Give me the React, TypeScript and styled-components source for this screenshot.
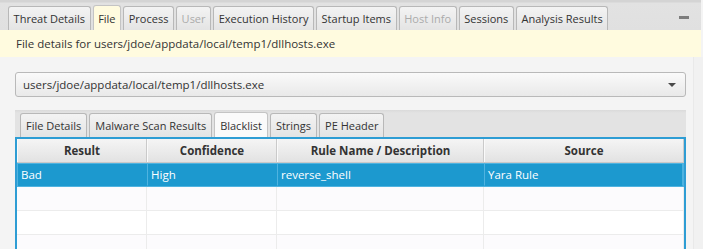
import React from "react";
import styled, { createGlobalStyle, css } from "styled-components";

const GlobalStyle = createGlobalStyle`
  html, body {
    margin: 0;
    padding: 0;
    background: #f4f4f4;
    font-family: "Open Sans", "Noto Sans", sans-serif;
    font-size: 11.5px;
    color: #333333;
  }
  * { box-sizing: border-box; }
`;

const Window = styled.div`
  width: 703px;
  height: 249px;
  overflow: hidden;
  display: flex;
  flex-direction: column;
  background: #f4f4f4;
`;

const TopBar = styled.div`
  height: 30px;
  width: 701px;
  flex: none;
  display: flex;
  align-items: flex-end;
  gap: 2px;
  padding-left: 8px;
  background: linear-gradient(#d4d4d4 0px, #d4d4d4 2px, #e2e2e2 3px, #e0e0e0 100%);
`;

const Tab = styled.div<{ $selected?: boolean; $disabled?: boolean; $inner?: boolean }>`
  height: 24px;
  padding: 0 ${(p) => (p.$inner ? "5px" : "4.6px")};
  display: flex;
  align-items: center;
  white-space: nowrap;
  font-size: 11px;
  border: 1px solid #b8b8b8;
  border-bottom: none;
  border-radius: 3px 3px 0 0;
  background: linear-gradient(#f3f3f3, #e4e4e4);
  color: #333333;
  ${(p) => p.$disabled && css`color: #ababab;`}
  ${(p) =>
    p.$selected &&
    css`
      height: 25px;
      background: ${p.$inner ? "#fafafa" : "#fffbdf"};
      border-color: #c4c4c4;
    `}
`;

const Minimize = styled.div`
  margin-left: auto;
  margin-right: 12px;
  align-self: center;
  margin-top: 4px;
  width: 10px;
  height: 3px;
  background: #7d7d7d;
`;

const InfoBar = styled.div`
  height: 27px;
  width: 701px;
  flex: none;
  display: flex;
  align-items: center;
  padding-left: 16px;
  background: #fffbdf;
  color: #333333;
`;

const Body = styled.div`
  flex: 1;
  display: flex;
  flex-direction: column;
  padding: 15px 17px 0 15px;
  width: 703px;
  background: linear-gradient(to right, #f4f4f4 693px, #e9e9e9 693px, #e9e9e9 694px, #f1f1f1 694px);
`;

const Combo = styled.div`
  height: 25px;
  display: flex;
  align-items: center;
  justify-content: space-between;
  padding: 0 9px 0 7px;
  border: 1px solid #b9b9b9;
  border-radius: 3px;
  background: linear-gradient(#fafafa, #e9e9e9);
`;

const Arrow = styled.div`
  width: 0;
  height: 0;
  border-left: 4px solid transparent;
  border-right: 4px solid transparent;
  border-top: 4px solid #4a4a4a;
`;

const InnerPane = styled.div`
  margin-top: 13px;
  display: flex;
  flex-direction: column;
`;

const InnerHeader = styled.div`
  height: 27px;
  display: flex;
  align-items: flex-end;
  gap: 2px;
  padding-left: 5px;
  background: linear-gradient(#dadada, #e3e3e3 3px, #e3e3e3);
`;

const Table = styled.div`
  border: 2px solid #2e9dd4;
  border-bottom: none;
  background: #ffffff;
  height: 120px;
`;

const Row = styled.div<{ $selected?: boolean; $alt?: boolean }>`
  display: grid;
  grid-template-columns: 130px 130px 207px 1fr;
  height: 24px;
  background: ${(p) => (p.$selected ? "#1c99cf" : p.$alt ? "#fcfbfd" : "#ffffff")};
  color: ${(p) => (p.$selected ? "#ffffff" : "#333333")};
  ${(p) => p.$selected && css`border: 1px solid #4fb3e0;`}
`;

const HeaderRow = styled.div`
  display: grid;
  grid-template-columns: 130px 130px 207px 1fr;
  height: 24px;
  background: linear-gradient(#f5f5f5, #e2e2e2);
  border-bottom: 1px solid #c9c9c9;
`;

const HeaderCell = styled.div`
  display: flex;
  align-items: center;
  justify-content: center;
  font-weight: 700;
  color: #333333;
  border-right: 1px solid #cacaca;
  border-left: 1px solid #fafafa;
`;

const Cell = styled.div<{ $selected?: boolean }>`
  display: flex;
  align-items: center;
  padding-left: 3px;
  border-right: 1px solid ${(p) => (p.$selected ? "#4fb3e0" : "#ececec")};
  border-bottom: 1px solid ${(p) => (p.$selected ? "transparent" : "#ececec")};
`;

const topTabs = [
  { label: "Threat Details" },
  { label: "File", selected: true },
  { label: "Process" },
  { label: "User", disabled: true },
  { label: "Execution History" },
  { label: "Startup Items" },
  { label: "Host Info", disabled: true },
  { label: "Sessions" },
  { label: "Analysis Results" },
];

const innerTabs = [
  { label: "File Details" },
  { label: "Malware Scan Results" },
  { label: "Blacklist", selected: true },
  { label: "Strings" },
  { label: "PE Header" },
];

const columns = ["Result", "Confidence", "Rule Name / Description", "Source"];
const rows: string[][] = [["Bad", "High", "reverse_shell", "Yara Rule"], ["", "", "", ""], ["", "", "", ""], ["", "", "", ""]];

export default function App() {
  return (
    <Window>
      <GlobalStyle />
      <TopBar>
        {topTabs.map((t) => (
          <Tab key={t.label} $selected={t.selected} $disabled={t.disabled}>
            {t.label}
          </Tab>
        ))}
        <Minimize />
      </TopBar>
      <InfoBar>File details for users/jdoe/appdata/local/temp1/dllhosts.exe</InfoBar>
      <Body>
        <Combo>
          <span>users/jdoe/appdata/local/temp1/dllhosts.exe</span>
          <Arrow />
        </Combo>
        <InnerPane>
          <InnerHeader>
            {innerTabs.map((t) => (
              <Tab key={t.label} $inner $selected={t.selected}>
                {t.label}
              </Tab>
            ))}
          </InnerHeader>
          <Table>
            <HeaderRow>
              {columns.map((c) => (
                <HeaderCell key={c}>{c}</HeaderCell>
              ))}
            </HeaderRow>
            {rows.map((r, i) => (
              <Row key={i} $selected={i === 0} $alt={i % 2 === 1}>
                {r.map((v, j) => (
                  <Cell key={j} $selected={i === 0}>
                    {v}
                  </Cell>
                ))}
              </Row>
            ))}
          </Table>
        </InnerPane>
      </Body>
    </Window>
  );
}
